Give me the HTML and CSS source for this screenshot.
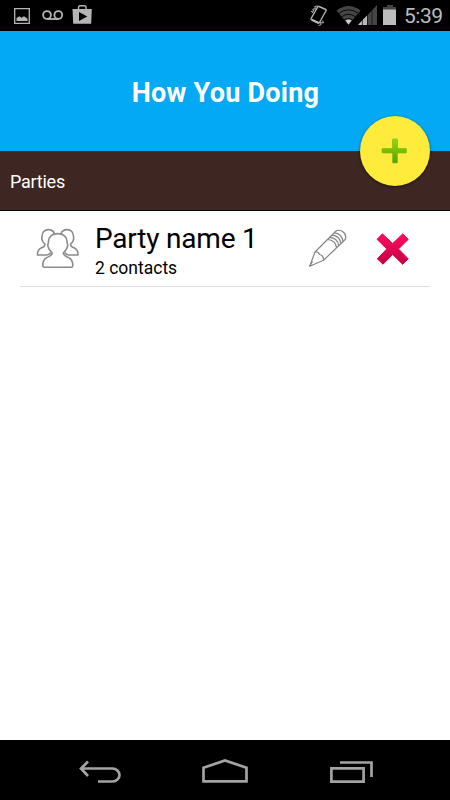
FILE: index.html
```html
<!DOCTYPE html>
<html lang="en">
<head>
<meta charset="utf-8">
<title>How You Doing</title>
<link rel="stylesheet" href="styles.css">
</head>
<body>
<div class="status">
  <svg class="status-left" width="96" height="31" viewBox="0 0 96 31">
    <path d="M14.7 8.7h14.600v14.600h-14.600z" fill="none" stroke="#b5b5b5" stroke-width="1.300"/>
    <path d="M16.500 21v-3l3-1.800 2 1.500 2.500-1.500 3.500 2.500v2.300z" fill="#b5b5b5"/>
    <g fill="none" stroke="#b5b5b5" stroke-width="1.800"><circle cx="47" cy="15" r="3.900"/><circle cx="58.300" cy="15" r="3.900"/><path d="M47 19h11.300"/></g>
    <path fill="#b5b5b5" fill-rule="evenodd" d="M72.500 9h19.300l-.6 14.800h-18zM79 12v9l8.300-4.500z"/>
    <path d="M78.500 9.500V7.500q0-1.800 1.800-1.800h4q1.800 0 1.800 1.800v2" fill="none" stroke="#b5b5b5" stroke-width="1.400"/>
  </svg>
  <svg class="status-right" width="90" height="31" viewBox="308 0 90 31">
    <g fill="none" stroke="#b5b5b5"><path d="M319 6.500l6.800 3q.7.400.3 1l-6.600 12q-.4.800-1.200.4l-6.800-3.200q-.8-.4-.4-1.200l6.600-11.600q.5-.7 1.300-.4z" stroke-width="1.400"/><path d="M313.300 13l-2-1.500 2.500-.5-1-2 2.500 0-.5-2.500 3-.5M318.500 25.500l2.500-.8-.5-2.200 2.800.5-.6-2.500" stroke-width="1"/><path d="M311.800 19.700l6.800 3.200" stroke-width="2.200"/></g>
    <path d="M336.500 10.500q12-9 24 0L348.500 25z" fill="#454545"/>
    <path d="M338.500 13.500q10-7.500 20 0M341.300 17q7.200-5.500 14.400 0M344 20.300q4.500-3.500 9 0" fill="none" stroke="#000" stroke-width=".9"/>
    <path d="M345.500 20.500q3-2 6 0l-3 4z" fill="#ccc"/>
    <path d="M377 5v20h-19z" fill="#454545"/><path d="M367 15.500v9.500h-9z" fill="#b9b9b9"/>
    <path d="M362.500 12v13M367.500 8v17M372 6v19" stroke="#000" stroke-width=".6"/>
    <path d="M387 5h6v2h3v3h-13V7h4z" fill="#454545"/><path d="M383 9.500h13V25h-13z" fill="#bcbcbc"/>
  </svg>
  <span class="clock">5:39</span>
</div>
<header class="header">
  <h1>How You Doing</h1>
  <button class="add" aria-label="Add">
    <svg width="28" height="28" viewBox="0 0 28 28">
      <defs><linearGradient id="green" x2="0" y2="1"><stop stop-color="#8fdc0a"/><stop offset="1" stop-color="#5c9f00"/></linearGradient></defs>
      <path d="M12.200 2h3.600q.7 0 .7.700v8.800h8.300q.7 0 .7.700v3.100q0 .7-.7.700h-8.300v9.300q0 .7-.7.700h-3.600q-.7 0-.7-.7v-9.300H1.700q-.7 0-.7-.7v-3.100q0-.7.700-.7h9.800V2.700q0-.7.700-.7z" fill="url(#green)" stroke="#86b81a" stroke-width=".7"/>
    </svg>
  </button>
</header>
<div class="section">Parties</div>
<main class="list">
  <div class="row">
    <svg class="people" width="46" height="44" viewBox="35 226 46 44">
      <g fill="none" stroke="#8c8c8c" stroke-width="1.600" stroke-linejoin="round">
        <path d="M57.700 233.600C63.500 233.600 67 237 67 241.500C67 244 68.300 244.500 67.500 246.500C66.500 250 65 251 63.300 253C64 256.300 66 256 69 257.800C72 259.500 72.800 261.500 72.800 265.500Q72.800 267.300 71.300 267.300H44.300Q42.800 267.300 42.800 265.500C42.800 261.500 43.400 259.500 46.400 257.800C49.400 256 51.500 256.300 52.200 253C50.500 251 49 250 48 246.500C47.200 244.500 48.500 244 48.500 241.500C48.500 237 52 233.600 57.700 233.600Z"/>
        <path d="M54.500 233.700C53.500 230.800 51.500 229.600 48.500 229.600C44.500 229.600 41.900 232.500 42 236.500C41.300 239.500 42.500 242 45 244C45 247 43.500 246.800 41 248C38 249.500 37.400 251.500 37.400 255H46.800C47.800 255 49.200 254.300 50.500 252.700M61 233.700C62 230.800 64 229.600 67 229.600C71 229.600 73.600 232.500 73.500 236.500C74.200 239.500 73 242 70.500 244C70.500 247 72 246.800 74.500 248C77.500 249.500 78.100 251.500 78.100 255H68.700C67.700 255 66.300 254.300 65 252.700"/>
      </g>
    </svg>
    <div class="info">
      <div class="name">Party name 1</div>
      <div class="count">2 contacts</div>
    </div>
    <svg class="pencil" width="42" height="42" viewBox="307 228 42 42">
      <g fill="none" stroke="#858585" stroke-width="1.200" stroke-linejoin="round">
        <path d="M309.700 266.300L315 252L335.500 231.500Q338.500 229 342.500 231.500Q347 234.500 345.200 239.500L323.500 260.300Z"/>
        <path d="M315 252Q318.500 251.500 319.500 254.500Q323.500 255 323.500 260.300M309.700 266.300L312.500 261.500"/>
        <path d="M327.700 239.500Q335.500 240 336.600 247.600M329.900 237.300Q337.500 238 338.700 245.500M332 235.200Q339.800 236 340.900 243.400M334.200 232.900Q341.700 233.500 343.100 241.400"/>
      </g>
    </svg>
    <svg class="delete" width="36" height="36" viewBox="375 231 36 36">
      <defs><linearGradient id="red" x2="0" y2="1"><stop stop-color="#ff0a60"/><stop offset="1" stop-color="#c40043"/></linearGradient></defs>
      <path d="M382.400 233.800L392.700 243.500L402.800 233.800L408.300 239.300L398.500 249L408.200 258.800L402.600 264.200L392.700 254.500L383 264.200L377.300 258.800L386.800 249L377 239.300Z" fill="url(#red)" stroke="url(#red)" stroke-width="1" stroke-linejoin="round"/>
    </svg>
  </div>
</main>
<nav class="nav">
  <svg width="450" height="60" viewBox="0 740 450 60">
    <g fill="none" stroke="#a3a3a3" stroke-width="2.700">
      <path d="M81 768.500h31.500a7 6.500 0 0 1 0 13H98M88 761.500l-7 7 7 7.500"/>
      <path d="M203.500 781.300v-13.600l21.500-7.200 21.500 7.200v13.600z"/>
      <path d="M331.400 768.400h32.200v13.200h-32.200zM340 762.500h31.500V777"/>
    </g>
  </svg>
</nav>
</body>
</html>
```
FILE: styles.css
```css
body {
  margin: 0;
  width: 450px;
  height: 800px;
  display: flex;
  flex-direction: column;
  overflow: hidden;
  background: #fff;
  color: #000;
  font-family: Roboto, sans-serif;
}
svg { display: block; flex: none; }
.status {
  height: 31px;
  flex: none;
  display: flex;
  align-items: center;
  background: #000;
}
.status-right { margin-left: auto; }
.clock {
  width: 46px;
  padding-left: 6px;
  padding-top: 2px;
  font-size: 21px;
  letter-spacing: -0.5px;
  line-height: 29px;
  color: #bcbcbc;
}
.header {
  position: relative;
  height: 120px;
  flex: none;
  display: flex;
  align-items: center;
  justify-content: center;
  background: #03a9f4;
}
.header h1 {
  margin: 3px 0 0;
  padding-left: 1px;
  font-size: 27px;
  letter-spacing: 0.25px;
  line-height: 32px;
  font-weight: 700;
  color: #fff;
}
.add {
  position: absolute;
  right: 20px;
  bottom: -35px;
  width: 70px;
  height: 70px;
  padding: 0;
  border: 0;
  border-radius: 50%;
  display: flex;
  align-items: center;
  justify-content: center;
  background: #ffeb3b;
  box-shadow: 0 1px 3px rgba(0, 0, 0, .55);
}
.add svg { margin-right: 1px; }
.section {
  box-sizing: border-box;
  height: 60px;
  flex: none;
  padding-left: 10px;
  border-bottom: 1px solid #000;
  background: #3e2723;
  color: #fff;
  font-size: 18px;
  letter-spacing: -0.25px;
  line-height: 61px;
}
.list { flex: 1; padding: 0 20px; }
.row {
  box-sizing: border-box;
  height: 76px;
  display: flex;
  align-items: flex-start;
  border-bottom: 1px solid #e0e0e0;
}
.people { margin: 15px 0 0 15px; }
.info { flex: 1; margin-left: 14px; padding-top: 10px; }
.name { font-size: 28px; letter-spacing: -0.2px; line-height: 36px; }
.count { font-size: 17.500px; line-height: 22px; }
.pencil { margin-top: 17px; }
.delete { margin: 20px 19px 0 26px; }
.nav { height: 60px; flex: none; background: #000; }
```
